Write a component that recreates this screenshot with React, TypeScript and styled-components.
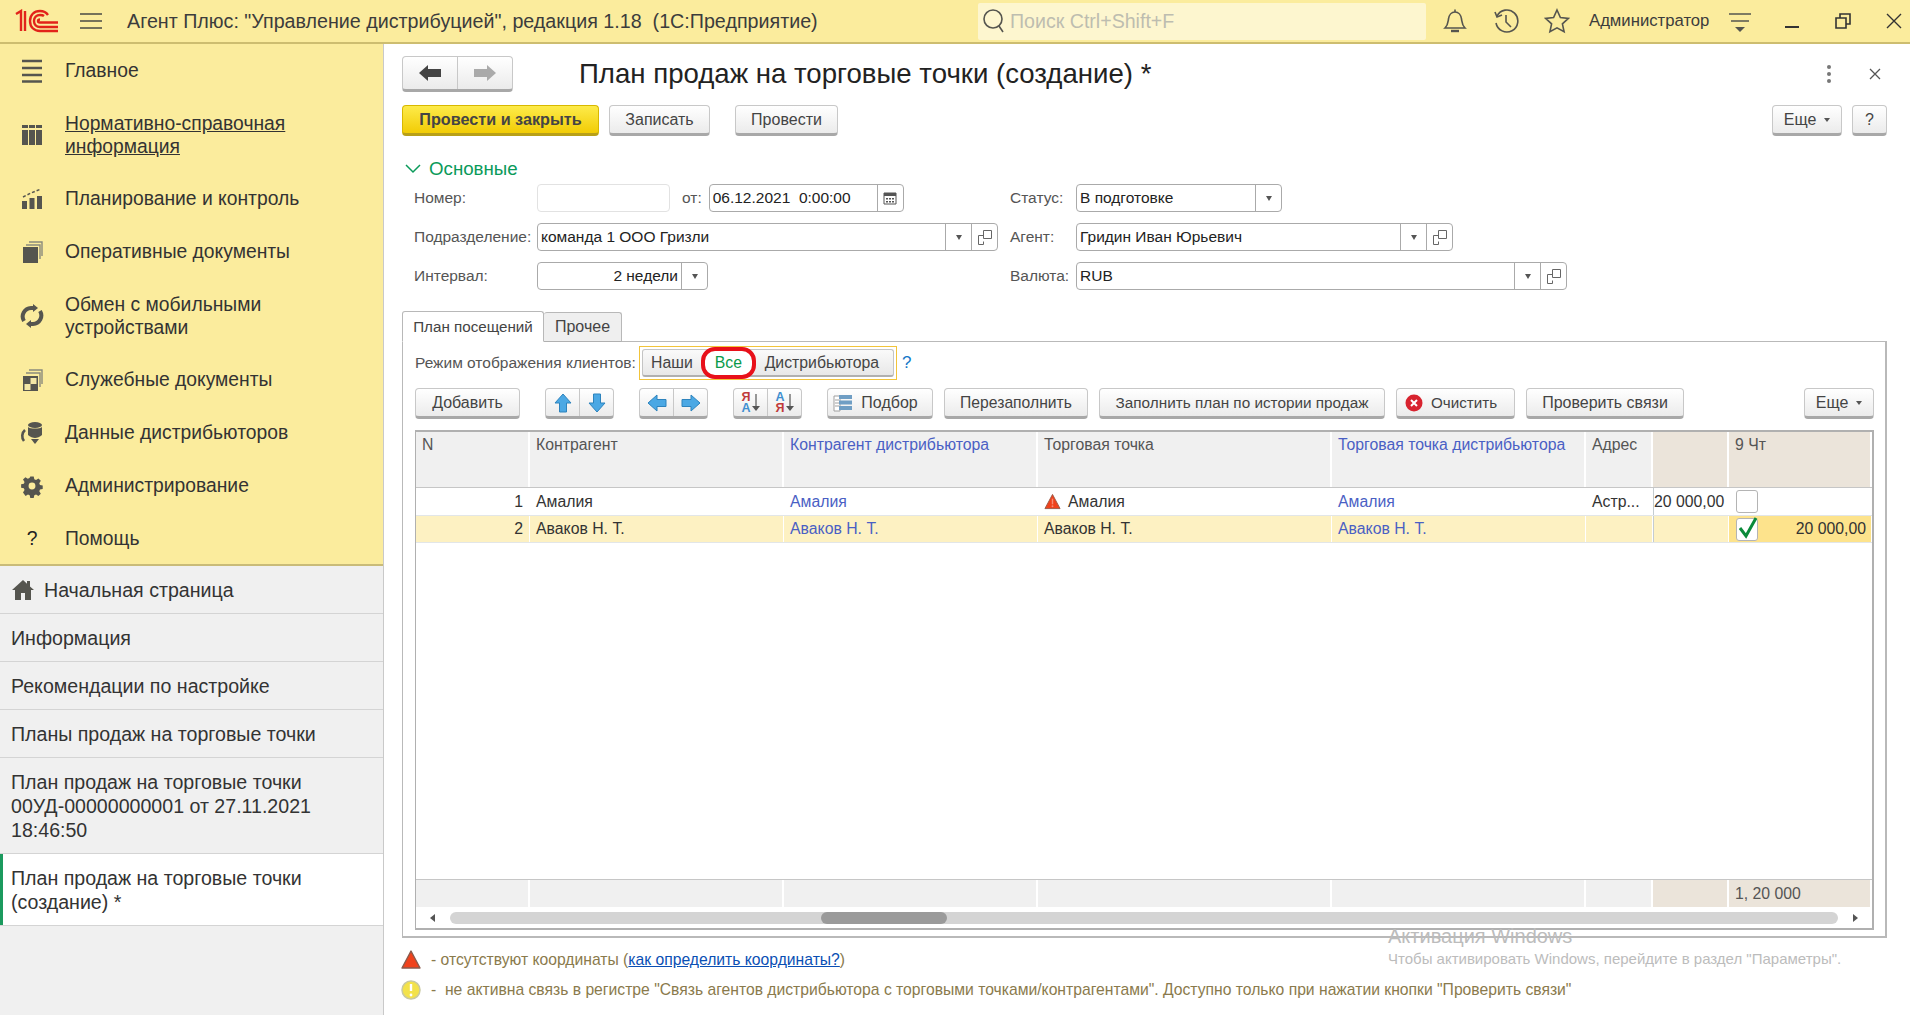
import React from 'react';
import styled, { createGlobalStyle } from 'styled-components';

const GlobalStyle = createGlobalStyle`
  html, body, #root {
    margin: 0;
    height: 100%;
  }
  body {
    font-family: "Liberation Sans", Arial, sans-serif;
    color: #333;
    background: #fff;
    overflow: hidden;
  }
`;

// layout
const Page = styled.div`
  width: 1910px;
  height: 1015px;
  display: flex;
  flex-direction: column;
  position: relative;
  overflow: hidden;
`;

const Header = styled.header`
  height: 42px;
  flex: none;
  display: flex;
  align-items: center;
  background: #fbec9d;
  border-bottom: 2px solid #cdbd70;
  box-sizing: content-box;
`;

const Logo = styled.svg`
  width: 46px;
  height: 24px;
  margin-left: 14px;
  flex: none;
`;

const Burger = styled.svg`
  width: 24px;
  height: 18px;
  margin-left: 19px;
  flex: none;
`;

const AppTitle = styled.div`
  margin-left: 24px;
  width: 851px;
  font-size: 19.7px;
  color: #3c3c3c;
  white-space: pre;
  flex: none;
`;

const Search = styled.div`
  width: 448px;
  height: 37px;
  flex: none;
  display: flex;
  align-items: center;
  gap: 4px;
  padding-left: 4px;
  box-sizing: border-box;
  background: #fdf6cf;
  color: #bdbdb0;
  font-size: 19.6px;
  border-radius: 2px;
`;

const HeadIcons = styled.div`
  display: flex;
  align-items: center;
  flex: 1;
  padding-left: 16px;
`;

const HeadIcon = styled.svg<{ $w?: number }>`
  width: ${(p) => p.$w ?? 26}px;
  height: 26px;
  flex: none;
  margin-right: ${(p) => p.$w ? 0 : 25}px;
`;

const UserName = styled.div`
  font-size: 16.7px;
  color: #3c3c3c;
  margin-left: 19px;
  margin-right: 19px;
`;

const WinButton = styled.div`
  width: 51px;
  height: 41px;
  display: flex;
  align-items: center;
  justify-content: center;
  flex: none;
`;

const WinGroup = styled.div`
  display: flex;
  margin-left: 14px;
`;

const Body = styled.div`
  flex: 1;
  display: flex;
  min-height: 0;
`;

const Sidebar = styled.aside`
  width: 383px;
  flex: none;
  display: flex;
  flex-direction: column;
  background: #f0f0f0;
  border-right: 1px solid #c9c9c9;
`;

const Menu = styled.nav`
  background: #fbec9d;
  border-bottom: 2px solid #c9bb78;
  flex: none;
`;

const MenuItem = styled.div<{ $tall?: boolean }>`
  height: ${(p) => (p.$tall ? 75 : 53)}px;
  display: flex;
  align-items: center;
  padding-left: 20px;
  font-size: 19.3px;
  line-height: 23px;
  color: #333;
  &:last-child {
    height: 52px;
  }
`;

const MenuIcon = styled.svg`
  width: 24px;
  height: 24px;
  flex: none;
  margin-right: 21px;
`;

const MenuGlyph = styled.span`
  width: 24px;
  flex: none;
  margin-right: 21px;
  text-align: center;
  color: #222;
`;

const MenuLink = styled.span`
  text-decoration: underline;
`;

const OpenList = styled.div`
  display: flex;
  flex-direction: column;
`;

const OpenItem = styled.div<{ $active?: boolean }>`
  display: flex;
  align-items: center;
  gap: 9px;
  padding: 12px 10px 11px 11px;
  min-height: 24px;
  font-size: 19.6px;
  line-height: 24px;
  color: #333;
  background: ${(p) => (p.$active ? '#fff' : 'transparent')};
  border-bottom: 1px solid #d4d4d4;
  box-shadow: ${(p) => (p.$active ? 'inset 3px 0 0 #1b9a5e' : 'none')};
  white-space: nowrap;
`;

const Main = styled.main`
  flex: 1;
  min-width: 0;
  display: flex;
  flex-direction: column;
  padding: 12px 23px 0 18px;
`;

const TitleRow = styled.div`
  height: 36px;
  flex: none;
  display: flex;
  align-items: center;
`;

const DocTitle = styled.h1`
  margin: 0 0 0 66px;
  font-weight: 400;
  font-size: 27.6px;
  color: #222;
  flex: 1;
`;

const Kebab = styled.div`
  display: flex;
  flex-direction: column;
  gap: 3px;
  margin-right: 37px;
  span {
    width: 4px;
    height: 4px;
    border-radius: 50%;
    background: #777;
  }
`;

const CloseMark = styled.svg`
  width: 14px;
  height: 14px;
  margin-right: 5px;
`;

const ActionRow = styled.div`
  display: flex;
  align-items: flex-start;
  margin-top: 13px;
  height: 31px;
  flex: none;
  gap: 10px;
`;

const Btn = styled.button<{ $w: number; $primary?: boolean; $gapLeft?: number; $size?: number; $pr?: number }>`
  width: ${(p) => p.$w}px;
  height: 31px;
  padding: 0 ${(p) => p.$pr ?? 0}px 0 0;
  flex: none;
  display: inline-flex;
  align-items: center;
  justify-content: center;
  gap: 8px;
  font-family: inherit;
  font-size: ${(p) => p.$size ?? 16}px;
  font-weight: ${(p) => (p.$primary ? 700 : 400)};
  color: #444;
  margin-left: ${(p) => p.$gapLeft ?? 0}px;
  border: 1px solid ${(p) => (p.$primary ? '#d8b800' : '#c8c8c8')};
  border-bottom: 3px solid ${(p) => (p.$primary ? '#b8a018' : '#a8a8a8')};
  border-radius: 4px;
  background: ${(p) =>
    p.$primary ? 'linear-gradient(#fdeb4a, #f2cc05)' : 'linear-gradient(#ffffff, #ebebeb)'};
`;

const SmallCaret = styled.i`
  width: 0;
  height: 0;
  border-left: 3px solid transparent;
  border-right: 3px solid transparent;
  border-top: 4px solid #555;
`;

const Split = styled.div<{ $w: number; $tall?: boolean }>`
  width: ${(p) => p.$w}px;
  height: ${(p) => (p.$tall ? 36 : 31)}px;
  flex: none;
  display: flex;
  border: 1px solid #c8c8c8;
  border-bottom: 3px solid #a8a8a8;
  border-radius: 4px;
  background: linear-gradient(#ffffff, #ebebeb);
  box-sizing: border-box;
`;

const SplitPart = styled.div`
  flex: 1;
  display: flex;
  align-items: center;
  justify-content: center;
  & + & {
    border-left: 1px solid #c8c8c8;
  }
`;

const Section = styled.div`
  margin-top: 22px;
  height: 22px;
  display: flex;
  align-items: center;
  gap: 8px;
  padding-left: 3px;
  font-size: 18.7px;
  color: #0a9a5a;
  flex: none;
`;

const Form = styled.div`
  margin-top: 4px;
  display: flex;
  flex-direction: column;
  gap: 11px;
  flex: none;
`;

const FormRow = styled.div`
  display: flex;
  align-items: center;
  height: 28px;
`;

const FormLeft = styled.div`
  width: 608px;
  flex: none;
  display: flex;
  align-items: center;
  padding-left: 12px;
  box-sizing: border-box;
`;

const Label = styled.span<{ $w: number }>`
  width: ${(p) => p.$w}px;
  flex: none;
  font-size: 15.5px;
  color: #555;
  white-space: nowrap;
`;

const Field = styled.div<{ $w: number; $muted?: boolean }>`
  width: ${(p) => p.$w}px;
  height: 28px;
  flex: none;
  display: flex;
  align-items: stretch;
  box-sizing: border-box;
  border: 1px solid ${(p) => (p.$muted ? '#e2e2e2' : '#aaa')};
  border-radius: 4px;
  background: #fff;
  font-size: 15.5px;
  color: #222;
`;

const FieldText = styled.div<{ $right?: boolean }>`
  flex: 1;
  min-width: 0;
  display: flex;
  align-items: center;
  justify-content: ${(p) => (p.$right ? 'flex-end' : 'flex-start')};
  padding: 0 3px;
  white-space: pre;
`;

const FieldBtn = styled.div`
  width: 25px;
  flex: none;
  display: flex;
  align-items: center;
  justify-content: center;
  border-left: 1px solid #aaa;
`;

const Caret = styled.i`
  width: 0;
  height: 0;
  border-left: 3px solid transparent;
  border-right: 3px solid transparent;
  border-top: 5px solid #555;
`;

const DateFrom = styled.span`
  margin: 0 7px 0 12px;
  font-size: 15.5px;
  color: #555;
`;

const Tabs = styled.div`
  margin-top: 21px;
  display: flex;
  flex: none;
  height: 31px;
  align-items: flex-end;
  position: relative;
  z-index: 1;
  margin-bottom: -1px;
`;

const Tab = styled.div<{ $active?: boolean }>`
  height: ${(p) => (p.$active ? 31 : 30)}px;
  box-sizing: border-box;
  width: ${(p) => (p.$active ? 142 : 78)}px;
  display: flex;
  align-items: center;
  justify-content: center;
  white-space: nowrap;
  font-size: ${(p) => (p.$active ? 15.2 : 16)}px;
  color: #444;
  background: ${(p) => (p.$active ? '#fff' : '#efefef')};
  border: 1px solid #b8b8b8;
  border-bottom: ${(p) => (p.$active ? '1px solid #fff' : '1px solid #b0b0b0')};
  border-left: ${(p) => (p.$active ? '1px solid #b8b8b8' : 'none')};
  border-radius: 3px 3px 0 0;
`;

const Panel = styled.section`
  flex: 1;
  min-height: 0;
  display: flex;
  flex-direction: column;
  border: 2px solid #b9b9b9;
  border-width: 1px 2px 2px 1px;
  padding: 4px 11px 6px 12px;
`;

const ModeRow = styled.div`
  display: flex;
  align-items: center;
  height: 34px;
  flex: none;
  font-size: 15.5px;
  color: #555;
`;

const ModeFrame = styled.div`
  margin-left: 3px;
  padding: 2px;
  display: flex;
  border: 1px solid #f2c43a;
  position: relative;
`;

const ModeGroup = styled.div`
  width: 252px;
  height: 28px;
  box-sizing: border-box;
  display: flex;
  align-items: center;
  border: 1px solid #c4c4c4;
  border-bottom: 2px solid #b0b0b0;
  border-radius: 3px;
  background: linear-gradient(#fafafa, #e8e8e8);
  font-size: 15.8px;
  color: #444;
`;

const ModeOption = styled.span<{ $w: number; $on?: boolean }>`
  width: ${(p) => p.$w}px;
  flex: none;
  text-align: center;
  color: ${(p) => (p.$on ? '#0a9a4a' : '#444')};
  ${(p) =>
    p.$on &&
    `
    height: 32px;
    line-height: 24px;
    margin: 0 0 -1px;
    box-sizing: border-box;
    border: 4px solid #e8101a;
    border-radius: 14px;
    background: #fff;
  `}
`;

const Hint = styled.span`
  margin-left: 5px;
  color: #1478c8;
  font-size: 17px;
`;

const Toolbar = styled.div`
  margin-top: 8px;
  height: 31px;
  flex: none;
  display: flex;
  gap: 11px;
`;

const ToolGroup = styled.div`
  display: flex;
  gap: 25px;
`;

const EndBtn = styled.div`
  margin-left: auto;
`;

const Table = styled.div`
  flex: 1;
  min-height: 0;
  margin-top: 11px;
  display: flex;
  flex-direction: column;
  border: 2px solid #b0b0b0;
  border-width: 2px 2px 2px 1px;
`;

const columns = '114px 254px 254px 294px 254px 67px 76px 143px';

const Row = styled.div<{ $h: number; $bg?: string; $line?: string }>`
  height: ${(p) => p.$h}px;
  flex: none;
  display: grid;
  grid-template-columns: ${columns};
  box-sizing: border-box;
  background: ${(p) => p.$bg ?? '#fff'};
  border-bottom: 1px solid ${(p) => p.$line ?? '#e2e6e8'};
  font-size: 15.8px;
  color: #333;
`;

const HeadCell = styled.div<{ $tan?: boolean; $link?: boolean }>`
  background: ${(p) => (p.$tan ? '#ebe4da' : '#f0f0f0')};
  border-right: 2px solid #fff;
  padding: 2px 6px;
  color: ${(p) => (p.$link ? '#4a5fc4' : '#555')};
  font-size: 15.8px;
  line-height: 22px;
`;

const Cell = styled.div<{ $right?: boolean; $link?: boolean; $tan?: boolean; $bare?: boolean }>`
  display: flex;
  align-items: center;
  gap: 7px;
  justify-content: ${(p) => (p.$right ? 'flex-end' : 'flex-start')};
  padding: 0 ${(p) => (p.$bare ? 0 : 6)}px;
  color: ${(p) => (p.$link ? '#4a5fc4' : '#333')};
  background: ${(p) => (p.$tan ? '#fde38c' : 'transparent')};
  border-right: 1px solid #fff;
  white-space: nowrap;
`;

const Divided = styled(Cell)`
  border-left: 1px solid #c4ccd0;
`;

const CheckBox = styled.div`
  width: 22px;
  height: 23px;
  flex: none;
  box-sizing: border-box;
  border: 1px solid #b4b4b4;
  border-radius: 3px;
  background: #fff;
  display: flex;
  align-items: center;
  justify-content: center;
  margin-left: 7px;
  position: relative;
`;

const Tick = styled.svg`
  position: absolute;
  left: 1px;
  top: -3px;
  width: 22px;
  height: 24px;
`;

const CheckValue = styled.span`
  margin-left: auto;
  padding-right: 5px;
`;

const TableBody = styled.div`
  flex: 1;
  min-height: 0;
`;

const Footer = styled(Row)`
  border-top: 1px solid #c6c6c6;
  background: #fff;
  align-items: stretch;
`;

const FootCell = styled(HeadCell)`
  line-height: 27px;
  padding: 0 6px;
`;

const ScrollBar = styled.div`
  height: 20px;
  flex: none;
  display: flex;
  align-items: center;
  padding: 0 14px;
  gap: 15px;
`;

const ScrollTrack = styled.div`
  flex: 1;
  height: 12px;
  border-radius: 6px;
  background: #d4d4d4;
  padding-left: 371px;
`;

const ScrollThumb = styled.div`
  width: 126px;
  height: 12px;
  border-radius: 6px;
  background: #9a9a9a;
`;

const ScrollArrow = styled.i<{ $dir: 'left' | 'right' }>`
  width: 0;
  height: 0;
  border-top: 4px solid transparent;
  border-bottom: 4px solid transparent;
  ${(p) => (p.$dir === 'left' ? 'border-right: 5px solid #555;' : 'border-left: 5px solid #555;')}
`;

const Legend = styled.div`
  flex: none;
  height: 77px;
  display: flex;
  flex-direction: column;
  padding-top: 7px;
  box-sizing: border-box;
  font-size: 15.7px;
  color: #8a7a4c;
`;

const LegendRow = styled.div`
  height: 30px;
  display: flex;
  align-items: center;
  white-space: pre;
`;

const LegendIcon = styled.svg`
  width: 20px;
  height: 22px;
  flex: none;
  margin-right: 10px;
  margin-left: -1px;
`;

const LegendLink = styled.a`
  color: #0a4fb4;
  text-decoration: underline;
`;

const Watermark = styled.div`
  position: absolute;
  left: 1388px;
  top: 924px;
  color: #bcbcbc;
  pointer-events: none;
`;

const WatermarkTitle = styled.div`
  font-size: 20px;
  line-height: 24px;
`;

const WatermarkText = styled.div`
  font-size: 15px;
  line-height: 20px;
  margin-top: 1px;
`;

const SortMark = styled.span`
  display: inline-flex;
  align-items: center;
  gap: 1px;
`;

const SortLetters = styled.span`
  display: flex;
  flex-direction: column;
  font-size: 12.5px;
  line-height: 11px;
  font-weight: 700;
`;

const SortLetter = styled.span<{ $c: string }>`
  color: ${(p) => p.$c};
`;

// icons
const ICON = '#55554f';

const CopyIcon = () => (
  <svg width="14" height="15" viewBox="0 0 14 15" fill="none" stroke="#666" strokeWidth="1">
    <path d="M5.500.5h8v8h-8z" />
    <path d="M5.500 5.500h-5v9h5v-3" />
  </svg>
);

const ArrowUp = ({ rotate = 0 }: { rotate?: number }) => (
  <svg width="18" height="20" viewBox="0 0 18 20" style={{ transform: `rotate(${rotate}deg)` }}>
    <path d="M9 1 17 10h-4.500v9h-7v-9H1z" fill="#4ba8e4" stroke="#2d83bd" strokeWidth="1" />
  </svg>
);

const SortIcon = ({ top, bottom, ct, cb }: { top: string; bottom: string; ct: string; cb: string }) => (
  <SortMark>
    <SortLetters>
      <SortLetter $c={ct}>{top}</SortLetter>
      <SortLetter $c={cb}>{bottom}</SortLetter>
    </SortLetters>
    <svg width="8" height="20" viewBox="0 0 8 20">
      <path d="M4 1v13" stroke="#555" strokeWidth="1.200" />
      <path d="M0 13h8l-4 5z" fill="#555" />
    </svg>
  </SortMark>
);

const WarnIcon = ({ size = 18 }: { size?: number }) => (
  <svg width={size} height={size} viewBox="0 0 18 18">
    <path d="M9 1.500 17 16.500H1z" fill="#f0421c" stroke="#9a5a48" strokeWidth="1" strokeLinejoin="round" />
    <path d="M9 6v6" stroke="#fff" strokeOpacity=".4" strokeWidth="1.500" />
    <circle cx="9" cy="14" r="1" fill="#fff" fillOpacity=".4" />
  </svg>
);

export default function App() {
  return (
    <Page>
      <GlobalStyle />
      <Header>
        <Logo viewBox="0 0 46 24" fill="none" stroke="#e2231a" strokeWidth="2.400">
          <path d="M2 5 7 2v20M11 2v20" />
          <path d="M34 6c-2-3-5-4-8-4-6 0-10 4-10 10s4 10 10 10h18" />
          <path d="M30 7c-1-.800-2.500-1-4-1-3.500 0-6 2.500-6 6s2.500 6 6 6h18" />
          <path d="M26 10.500c-1.200 0-2 .7-2 1.500s.8 1.500 2 1.500h18" />
        </Logo>
        <Burger viewBox="0 0 24 18" stroke="#4a4a44" strokeWidth="1.500">
          <path d="M1 2h22M1 9h22M1 16h22" />
        </Burger>
        <AppTitle>{'Агент Плюс: "Управление дистрибуцией", редакция 1.18  (1С:Предприятие)'}</AppTitle>
        <Search>
          <svg width="24" height="28" viewBox="0 0 24 28" fill="none" stroke="#55554f" strokeWidth="1.600">
            <circle cx="11" cy="12" r="9" />
            <path d="m17 19 4 6" />
          </svg>
          Поиск Ctrl+Shift+F
        </Search>
        <HeadIcons>
          <HeadIcon viewBox="0 0 26 26" fill="none" stroke={ICON} strokeWidth="1.600">
            <path d="M3 20c3-3 3-6 3.500-9C7 7 9.500 4 13 4s6 3 6.500 7c.5 3 .5 6 3.500 9z" />
            <path d="M13 1.500V4" />
            <path d="M9 23h8" strokeWidth="2.400" />
          </HeadIcon>
          <HeadIcon viewBox="0 0 26 26" fill="none" stroke={ICON} strokeWidth="1.600">
            <path d="M4 8a11 11 0 1 1-1 7" />
            <path d="M2 4l2 5 5-2" />
            <path d="M13 7v7l5 5" />
          </HeadIcon>
          <HeadIcon $w={26} viewBox="0 0 26 26" fill="none" stroke={ICON} strokeWidth="1.600">
            <path d="m13 2 3.400 7.500 8 .9-6 5.400 1.700 8L13 19.800 5.900 23.800l1.700-8-6-5.400 8-.9z" />
          </HeadIcon>
          <UserName>Администратор</UserName>
          <HeadIcon $w={24} viewBox="0 0 24 26" fill="none" stroke={ICON} strokeWidth="1.500">
            <path d="M1 6h22M3 13h18" />
            <path d="M7 19h10l-5 5z" fill={ICON} stroke="none" />
          </HeadIcon>
          <WinGroup>
            <WinButton>
              <svg width="16" height="16" viewBox="0 0 16 16"><path d="M1 14h14" stroke="#333" strokeWidth="2" /></svg>
            </WinButton>
            <WinButton>
              <svg width="16" height="16" viewBox="0 0 16 16" fill="none" stroke="#333" strokeWidth="1.600">
                <path d="M1 5h10v10H1zM5 5V1h10v10h-4" />
              </svg>
            </WinButton>
            <WinButton>
              <svg width="16" height="16" viewBox="0 0 16 16" stroke="#333" strokeWidth="1.400">
                <path d="m1 1 14 14M15 1 1 15" />
              </svg>
            </WinButton>
          </WinGroup>
        </HeadIcons>
      </Header>

      <Body>
        <Sidebar>
          <Menu>
            <MenuItem>
              <MenuIcon viewBox="0 0 24 24" stroke={ICON} strokeWidth="2.600">
                <path d="M2 2h20M2 9h20M2 16h20M2 22.500h20" />
              </MenuIcon>
              Главное
            </MenuItem>
            <MenuItem $tall>
              <MenuIcon viewBox="0 0 24 24" fill={ICON}>
                <path d="M2 2h6v3H2zM9 2h6v3H9zM16 2h6v3h-6zM2 7h6v15H2zM9 7h6v15H9zM16 7h6v15h-6z" />
              </MenuIcon>
              <MenuLink>Нормативно-справочная<br />информация</MenuLink>
            </MenuItem>
            <MenuItem>
              <MenuIcon viewBox="0 0 24 24" fill={ICON}>
                <path d="M2 14h5v8H2zM9.500 11h5v11h-5zM17 9h5v13h-5z" />
                <path d="M3 10 11 6l10-4" fill="none" stroke={ICON} strokeWidth="1.500" strokeDasharray="3 2" />
              </MenuIcon>
              Планирование и контроль
            </MenuItem>
            <MenuItem>
              <MenuIcon viewBox="0 0 24 24">
                <path d="M3 7h15v16H3z" fill={ICON} />
                <path d="M6 5h14v14M9 2h13v14" fill="none" stroke="#8a8a7c" strokeWidth="1.400" />
              </MenuIcon>
              Оперативные документы
            </MenuItem>
            <MenuItem $tall>
              <MenuIcon viewBox="0 0 24 24" fill="none" stroke={ICON} strokeWidth="4">
                <path d="M4 17A8.500 8.500 0 0 1 11 4h3" />
                <path d="M20 7a8.500 8.500 0 0 1-7 13h-3" />
                <path d="M13 0v8l5-4zM11 24v-8l-5 4z" fill={ICON} stroke="none" />
              </MenuIcon>
              <span>Обмен с мобильными<br />устройствами</span>
            </MenuItem>
            <MenuItem>
              <MenuIcon viewBox="0 0 24 24">
                <path d="M3 8h15v15H3z" fill={ICON} />
                <path d="M10.500 10h6v6h-6zM4.500 16h6v6h-6z" fill="#f3e7a6" />
                <path d="M6 5h14v14M9 2h13v14" fill="none" stroke="#8a8a7c" strokeWidth="1.400" />
              </MenuIcon>
              Служебные документы
            </MenuItem>
            <MenuItem>
              <MenuIcon viewBox="0 0 24 24" fill={ICON}>
                <ellipse cx="15" cy="4" rx="7" ry="3" />
                <path d="M8 6c2 2 12 2 14 0v8c-2 2-5 3-7 3s-5-1-7-3z" />
                <path d="M5 9a8 8 0 0 0-1 11" fill="none" stroke={ICON} strokeWidth="2.600" />
                <path d="M11 18h8l-4 5z" />
              </MenuIcon>
              Данные дистрибьюторов
            </MenuItem>
            <MenuItem>
              <MenuIcon viewBox="-2 -2 28 28" fill={ICON}>
                <path fillRule="evenodd" d="M10 1h4l.7 3.200 2 .8 2.800-1.800 2.800 2.800-1.800 2.800.8 2 3.200.7v4l-3.200.7-.8 2 1.800 2.800-2.800 2.800-2.800-1.800-2 .8-.7 3.200h-4l-.7-3.200-2-.8-2.800 1.800L1.500 19.500l1.800-2.800-.8-2L-.7 14v-4l3.200-.7.8-2L1.500 4.500l2.800-2.800 2.800 1.800 2-.8zM12 8a4 4 0 1 0 0 8 4 4 0 0 0 0-8z" />
              </MenuIcon>
              Администрирование
            </MenuItem>
            <MenuItem>
              <MenuGlyph>?</MenuGlyph>
              Помощь
            </MenuItem>
          </Menu>
          <OpenList>
            <OpenItem>
              <svg width="24" height="22" viewBox="0 0 24 22" fill="#55554f">
                <path d="M12 1 1 11h3v10h6v-7h4v7h6V11h3l-4-3.600V2h-3v2.700z" />
              </svg>
              Начальная страница
            </OpenItem>
            <OpenItem>Информация</OpenItem>
            <OpenItem>Рекомендации по настройке</OpenItem>
            <OpenItem>Планы продаж на торговые точки</OpenItem>
            <OpenItem>
              <span>План продаж на торговые точки<br />00УД-00000000001 от 27.11.2021<br />18:46:50</span>
            </OpenItem>
            <OpenItem $active>
              <span>План продаж на торговые точки<br />(создание) *</span>
            </OpenItem>
          </OpenList>
        </Sidebar>

        <Main>
          <TitleRow>
            <Split $w={111} $tall>
              <SplitPart>
                <svg width="22" height="16" viewBox="0 0 22 16"><path d="M0 8 9 0v4h13v8H9v4z" fill="#444" /></svg>
              </SplitPart>
              <SplitPart>
                <svg width="22" height="16" viewBox="0 0 22 16"><path d="M22 8 13 0v4H0v8h13v4z" fill="#aaa" /></svg>
              </SplitPart>
            </Split>
            <DocTitle>План продаж на торговые точки (создание) *</DocTitle>
            <Kebab><span /><span /><span /></Kebab>
            <CloseMark viewBox="0 0 14 14" stroke="#555" strokeWidth="1.300">
              <path d="m2 2 10 10M12 2 2 12" />
            </CloseMark>
          </TitleRow>

          <ActionRow>
            <Btn $primary $w={197} $size={16.2}>Провести и закрыть</Btn>
            <Btn $w={101}>Записать</Btn>
            <Btn $w={103} $gapLeft={15}>Провести</Btn>
            <Btn $w={70} $gapLeft={924}>Еще <SmallCaret /></Btn>
            <Btn $w={35}>?</Btn>
          </ActionRow>

          <Section>
            <svg width="16" height="10" viewBox="0 0 16 10" fill="none" stroke="#0a9a5a" strokeWidth="1.500">
              <path d="m1 1 7 7 7-7" />
            </svg>
            Основные
          </Section>

          <Form>
            <FormRow>
              <FormLeft>
                <Label $w={123}>Номер:</Label>
                <Field $w={133} $muted />
                <DateFrom>от:</DateFrom>
                <Field $w={195}>
                  <FieldText>06.12.2021  0:00:00</FieldText>
                  <FieldBtn>
                    <svg width="14" height="14" viewBox="0 0 14 14">
                      <path d="M1 2h12v11H1z" fill="none" stroke="#555" />
                      <path d="M1 2h12v3H1zM3 7h2v1.500H3zM6 7h2v1.500H6zM9 7h2v1.500H9zM3 10h2v1.500H3zM6 10h2v1.500H6zM9 10h2v1.500H9z" fill="#555" />
                    </svg>
                  </FieldBtn>
                </Field>
              </FormLeft>
              <Label $w={66}>Статус:</Label>
              <Field $w={206}>
                <FieldText>В подготовке</FieldText>
                <FieldBtn><Caret /></FieldBtn>
              </Field>
            </FormRow>
            <FormRow>
              <FormLeft>
                <Label $w={123}>Подразделение:</Label>
                <Field $w={461}>
                  <FieldText>команда 1 ООО Гризли</FieldText>
                  <FieldBtn><Caret /></FieldBtn>
                  <FieldBtn><CopyIcon /></FieldBtn>
                </Field>
              </FormLeft>
              <Label $w={66}>Агент:</Label>
              <Field $w={377}>
                <FieldText>Гридин Иван Юрьевич</FieldText>
                <FieldBtn><Caret /></FieldBtn>
                <FieldBtn><CopyIcon /></FieldBtn>
              </Field>
            </FormRow>
            <FormRow>
              <FormLeft>
                <Label $w={123}>Интервал:</Label>
                <Field $w={171}>
                  <FieldText $right>2 недели</FieldText>
                  <FieldBtn><Caret /></FieldBtn>
                </Field>
              </FormLeft>
              <Label $w={66}>Валюта:</Label>
              <Field $w={491}>
                <FieldText>RUB</FieldText>
                <FieldBtn><Caret /></FieldBtn>
                <FieldBtn><CopyIcon /></FieldBtn>
              </Field>
            </FormRow>
          </Form>

          <Tabs>
            <Tab $active>План посещений</Tab>
            <Tab>Прочее</Tab>
          </Tabs>

          <Panel>
            <ModeRow>
              Режим отображения клиентов:
              <ModeFrame>
                <ModeGroup>
                  <ModeOption $w={58}>Наши</ModeOption>
                  <ModeOption $w={55} $on>Все</ModeOption>
                  <ModeOption $w={132}>Дистрибьютора</ModeOption>
                </ModeGroup>
              </ModeFrame>
              <Hint>?</Hint>
            </ModeRow>

            <Toolbar>
              <ToolGroup>
                <Btn $w={105}>Добавить</Btn>
                <Split $w={69}>
                  <SplitPart><ArrowUp /></SplitPart>
                  <SplitPart><ArrowUp rotate={180} /></SplitPart>
                </Split>
                <Split $w={69}>
                  <SplitPart><ArrowUp rotate={-90} /></SplitPart>
                  <SplitPart><ArrowUp rotate={90} /></SplitPart>
                </Split>
                <Split $w={69}>
                  <SplitPart><SortIcon top="Я" bottom="А" ct="#c03a3a" cb="#3f8fd0" /></SplitPart>
                  <SplitPart><SortIcon top="А" bottom="Я" ct="#3f8fd0" cb="#c03a3a" /></SplitPart>
                </Split>
                <Btn $w={106} $pr={9}>
                  <svg width="20" height="20" viewBox="0 0 20 20">
                    <path d="M1 3h6v15H1z" fill="#fff" stroke="#a0a0a0" />
                    <path d="M2 7h4M2 10h4M2 13h4" stroke="#a0a0a0" />
                    <path d="M6 2h13v4H6zM6 7.500h13v4H6zM6 13h13v4H6z" fill="#6f9ec4" />
                  </svg>
                  Подбор
                </Btn>
              </ToolGroup>
              <Btn $w={144} $size={15.7}>Перезаполнить</Btn>
              <Btn $w={286} $size={15.3}>Заполнить план по истории продаж</Btn>
              <Btn $w={119} $size={15.2} $pr={9}>
                <svg width="18" height="18" viewBox="0 0 18 18">
                  <circle cx="9" cy="9" r="8.500" fill="#d8232f" />
                  <path d="m6 6 6 6M12 6l-6 6" stroke="#fff" strokeWidth="2" />
                </svg>
                Очистить
              </Btn>
              <Btn $w={158}>Проверить связи</Btn>
              <EndBtn><Btn $w={70}>Еще <SmallCaret /></Btn></EndBtn>
            </Toolbar>

            <Table>
              <Row $h={56} $line="#c6c6c6">
                <HeadCell>N</HeadCell>
                <HeadCell>Контрагент</HeadCell>
                <HeadCell $link>Контрагент дистрибьютора</HeadCell>
                <HeadCell>Торговая точка</HeadCell>
                <HeadCell $link>Торговая точка дистрибьютора</HeadCell>
                <HeadCell>Адрес</HeadCell>
                <HeadCell $tan />
                <HeadCell $tan>9 Чт</HeadCell>
              </Row>
              <Row $h={28}>
                <Cell $right>1</Cell>
                <Cell>Амалия</Cell>
                <Cell $link>Амалия</Cell>
                <Cell><WarnIcon size={17} />Амалия</Cell>
                <Cell $link>Амалия</Cell>
                <Cell>Астр...</Cell>
                <Divided $bare>20 000,00</Divided>
                <Cell $bare><CheckBox /></Cell>
              </Row>
              <Row $h={27} $bg="#fdf1c2">
                <Cell $right>2</Cell>
                <Cell>Аваков Н. Т.</Cell>
                <Cell $link>Аваков Н. Т.</Cell>
                <Cell>Аваков Н. Т.</Cell>
                <Cell $link>Аваков Н. Т.</Cell>
                <Cell />
                <Divided />
                <Cell $tan $bare>
                  <CheckBox>
                    <Tick viewBox="0 0 22 24" fill="none" stroke="#0a8a3a" strokeWidth="3">
                      <path d="m2 12 6 8L18 2" />
                    </Tick>
                  </CheckBox>
                  <CheckValue>20 000,00</CheckValue>
                </Cell>
              </Row>
              <TableBody />
              <Footer $h={29} $line="#fff">
                <FootCell />
                <FootCell />
                <FootCell />
                <FootCell />
                <FootCell />
                <FootCell />
                <FootCell $tan />
                <FootCell $tan>1, 20 000</FootCell>
              </Footer>
              <ScrollBar>
                <ScrollArrow $dir="left" />
                <ScrollTrack><ScrollThumb /></ScrollTrack>
                <ScrollArrow $dir="right" />
              </ScrollBar>
            </Table>
          </Panel>

          <Legend>
            <LegendRow>
              <LegendIcon viewBox="0 0 20 22">
                <path d="M10 2 19 19H1z" fill="#f0421c" stroke="#8a5a4c" strokeWidth="1.400" strokeLinejoin="round" />
              </LegendIcon>
              {'- отсутствуют координаты ('}<LegendLink>как определить координаты?</LegendLink>)
            </LegendRow>
            <LegendRow>
              <LegendIcon viewBox="0 0 20 22">
                <circle cx="10" cy="11" r="9" fill="#f3e24a" stroke="#c9c9a0" strokeWidth="1.500" />
                <path d="M10 5v7" stroke="#fff" strokeWidth="2.400" />
                <circle cx="10" cy="16" r="1.400" fill="#fff" />
              </LegendIcon>
              {'-  не активна связь в регистре "Связь агентов дистрибьютора с торговыми точками/контрагентами". Доступно только при нажатии кнопки "Проверить связи"'}
            </LegendRow>
          </Legend>
        </Main>
      </Body>

      <Watermark>
        <WatermarkTitle>Активация Windows</WatermarkTitle>
        <WatermarkText>Чтобы активировать Windows, перейдите в раздел "Параметры".</WatermarkText>
      </Watermark>
    </Page>
  );
}
